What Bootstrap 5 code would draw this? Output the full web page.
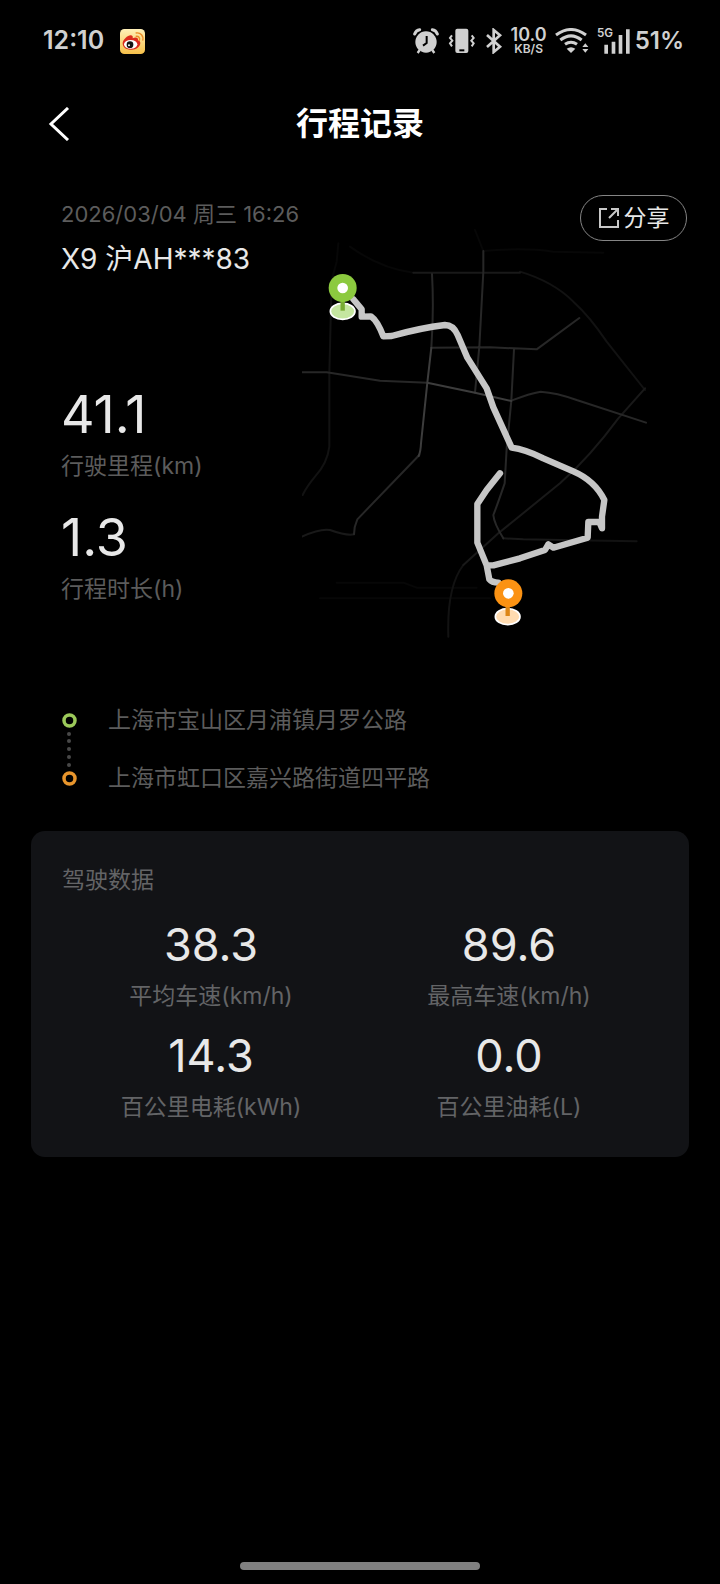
<!DOCTYPE html>
<html lang="zh-CN">
<head>
<meta charset="utf-8">
<meta name="viewport" content="width=device-width, initial-scale=1">
<title>行程记录</title>
<link href="https://cdn.jsdelivr.net/npm/bootstrap@5.3.0/dist/css/bootstrap.min.css" rel="stylesheet">
<style>
  body { background: #000; color: #e8e8e8; font-family: Inter, "Noto Sans CJK SC", sans-serif; font-weight: 400; }
  svg { display: block; flex: none; }
  .status-bar { height: 80px; padding: 2px 36px 0 43px; color: #d0d0d0; font-size: 25px; font-weight: 600; }
  .status-bar .battery { font-size: 24px; }
  .status-bar .net-rate { font-size: 18px; line-height: 16px; }
  .status-bar .net-unit { font-size: 12px; line-height: 12px; }
  .title-bar { height: 88px; padding: 0 48px; display: grid; grid-template-columns: 48px 1fr 48px; }
  .title-bar h1 { font-size: 32px; line-height: 48px; font-weight: 700; color: #fff; }
  .back-btn { color: #fff; }
  .page-main { padding: 0 31px; }
  .trip-hero { padding-left: 30px; margin-top: 24px; }
  .trip-info { width: 241px; padding-top: 6px; white-space: nowrap; }
  .muted-line { color: #5c5c5c; font-size: 22px; line-height: 32px; }
  .plate-line { font-size: 28px; line-height: 40px; margin-top: 9px; }
  .big-num { font-size: 52px; line-height: 64px; }
  .trip-stats { margin-top: 104px; }
  .stat-label { color: #5c5c5c; font-size: 23px; line-height: 32px; margin-top: 3px; }
  .trip-stats .trip-stat + .trip-stat { margin-top: 24px; }
  .trip-map { width: 100%; height: auto; }
  .share-btn { top: 3px; right: 2px; width: 107px; height: 46px; border: 1px solid #858585; border-radius: 23px; background: transparent; color: #e8e8e8; font-size: 23px; gap: 4px; }
  .route-list { padding-left: 31px; margin-top: 64px; }
  .route-list li { gap: 31px; color: #5c5c5c; font-size: 23px; line-height: 32px; }
  .route-dots { margin: -5px 0; }
  .drive-card { background: #121316; border-radius: 14px; margin-top: 37px; padding: 33px 31px 34px; }
  .drive-card h2 { color: #636466; font-size: 23px; line-height: 32px; font-weight: 400; margin: 0 0 17px; }
  .drive-card .big-num { font-size: 45px; line-height: 64px; }
  .drive-card .stat-label { color: #636466; margin-top: 3px; }
  .drive-grid { row-gap: 12px; }
  .home-bar { width: 240px; height: 8px; border-radius: 4px; background: #808080; margin-bottom: 14px; }
</style>
</head>
<body class="d-flex flex-column min-vh-100">
<div class="status-bar d-flex align-items-center justify-content-between">
  <div class="d-flex align-items-center gap-3">
    <span>12:10</span>
    <svg width="25" height="25" viewBox="0 0 75 75"><defs><linearGradient id="wb" x1="0" y1="0" x2="0" y2="1"><stop offset="0" stop-color="#fff0b8"/><stop offset="1" stop-color="#f6c04a"/></linearGradient></defs><rect width="75" height="75" rx="13" fill="url(#wb)"/><path d="M8 43c0-11 16-25 25-24 6 1 6 5 5 9 8-4 18-3 16 6 8 3 8 8 6 13-5 12-20 16-32 15C17 61 8 54 8 43z" fill="#dc2a1d"/><ellipse cx="32" cy="46" rx="20" ry="13" fill="#fff"/><circle cx="30" cy="47" r="10" fill="#141414"/><circle cx="27" cy="49" r="3" fill="#fff"/><path d="M47 22c9-2 14 5 11 13M47 12c15-3 25 9 21 23" fill="none" stroke="#ed8b25" stroke-width="4"/></svg>
  </div>
  <div class="d-flex align-items-center">
    <svg width="26" height="26" viewBox="0 0 78 78" fill="none" stroke="#d0d0d0"><circle cx="39" cy="42" r="32" fill="#d0d0d0" stroke="none"/><path d="M5 18Q9 6 20 5M73 18Q69 6 58 5" stroke-width="9" stroke-linecap="round"/><path d="M20 66l-6 9M58 66l6 9" stroke-width="7"/><path d="M41 24v21l-11 8" stroke="#000" stroke-width="6"/></svg>
    <svg class="ms-2" width="30" height="26" viewBox="0 0 90 78" fill="none" stroke="#d0d0d0" stroke-width="6"><rect x="25" y="2" width="39" height="73" rx="6" fill="#d0d0d0" stroke="none"/><path d="M37 67h15" stroke="#000"/><path d="M15 22l-6 8 7 8-7 8 6 9M74 22l6 8-7 8 7 8-6 9"/></svg>
    <svg class="ms-2" width="18" height="26" viewBox="0 0 54 78" fill="none" stroke="#d0d0d0" stroke-width="8"><path d="M6 21l39 35-19 16V6l19 16L6 57"/></svg>
    <div class="text-center ms-2"><div class="net-rate">10.0</div><div class="net-unit">KB/S</div></div>
    <svg class="ms-2" width="34" height="26" viewBox="0 0 102 78" fill="none" stroke="#d0d0d0" stroke-width="9"><path d="M3 21Q48-12 93 21M16 36q32-25 64 0M30 49q18-13 36 0"/><path d="M35 62q13-9 26 0L48 75z" fill="#d0d0d0" stroke="none"/><path d="M82 57l9-11 9 11zM82 63l9 11 9-11z" fill="#d0d0d0" stroke="none"/></svg>
    <svg class="ms-2" width="34" height="28" viewBox="0 0 102 84" fill="#d0d0d0"><text x="0" y="31" font-size="35" font-weight="600" font-family="Inter, sans-serif">5G</text><path d="M22 53h11v27H22zM44 44h11v36H44zM65 24h11v56H65zM87 7h11v73H87z"/></svg>
    <span class="battery ms-1">51%</span>
  </div>
</div>

<header class="title-bar align-items-center">
  <button class="back-btn btn p-0 border-0 text-start" type="button" aria-label="返回"><svg width="22" height="34" viewBox="0 0 22 34" fill="none" stroke="#fff" stroke-width="3"><path d="M20 1L3 17l17 16"/></svg></button>
  <h1 class="m-0 text-center">行程记录</h1>
</header>

<main class="page-main">
  <section class="trip-hero d-flex position-relative">
    <div class="trip-info flex-shrink-0">
      <div class="muted-line">2026/03/04 周三 16:26</div>
      <div class="plate-line">X9 沪AH***83</div>
      <div class="trip-stats">
        <div class="trip-stat"><div class="big-num">41.1</div><div class="stat-label">行驶里程(km)</div></div>
        <div class="trip-stat"><div class="big-num">1.3</div><div class="stat-label">行程时长(h)</div></div>
      </div>
    </div>
    <div class="flex-grow-1">
      <svg class="trip-map" viewBox="36 -24 1161 1344" fill="none" stroke-linejoin="round" stroke-linecap="round">
        <g stroke-width="6">
          <path stroke="#070707" d="M145 130L140 185L125 240M180 140Q270 205 370 218M580 153Q700 142 790 155L940 158M140 1148H340L380 1163H560M90 1195H600M555 90L580 153"/>
          <path stroke="#121212" d="M125 240L118 520V740Q112 790 75 830Q50 860 38 885M690 215Q790 245 850 305Q900 350 950 425L1065 570M520 1095Q470 1160 475 1310M850 1021L1040 1024"/>
          <path stroke="#191919" d="M370 218H690M1065 565L985 655Q900 770 810 850L625 1000L520 1095M640 1015L700 1018L850 1021M36 1010Q90 985 120 990Q170 1008 192 1003"/>
          <path stroke="#272727" d="M580 153V215L568 440L555 578M426 222Q432 330 424 443M424 443L600 442L740 448L868 354M672 448L664 602L650 745L644 850Q620 920 610 945Q612 970 640 1015M36 517H110Q190 530 270 542L412 548M664 602Q720 580 752 575Q800 578 860 600L1068 668M192 1003Q192 980 202 958L388 765"/>
          <path stroke="#3c3c3c" d="M424 443L412 548L393 730Q392 755 386 768M412 548L555 578L664 603"/>
        </g>
        <path stroke="#c6c6c6" stroke-width="19" d="M190 298L215 328V350L243 349Q262 362 280 409L305 408Q390 384 465 375Q490 375 503 405L532 473L590 565L610 622L665 743Q705 748 760 775L850 814Q915 842 943 900L936 950V985L928 966H895L893 1013L790 1043L775 1033L765 1050L690 1075L610 1096H590L562 1028V912L590 870L630 820M590 1096L598 1138Q606 1148 625 1148"/>
        <ellipse cx="158" cy="334" rx="37" ry="24" fill="#c5e6a0" stroke="#fff" stroke-width="5"/>
        <path d="M158 295v37" stroke="#78ac32" stroke-width="13" stroke-linecap="butt"/>
        <circle cx="158" cy="264" r="42" fill="#8cca3f"/><circle cx="158" cy="264" r="16" fill="#fff"/>
        <ellipse cx="653" cy="1250" rx="37" ry="24" fill="#ffdbb0" stroke="#fff" stroke-width="5"/>
        <path d="M653 1211v37" stroke="#dc8617" stroke-width="13" stroke-linecap="butt"/>
        <circle cx="655" cy="1180" r="42" fill="#fb9213"/><circle cx="655" cy="1180" r="16" fill="#fff"/>
      </svg>
    </div>
    <button class="share-btn position-absolute d-flex align-items-center justify-content-center p-0" type="button"><svg width="22" height="22" viewBox="0 0 22 22" fill="none" stroke="#c8c8c8" stroke-width="2"><path d="M9 2H2v18h18v-7M13 2h7v7M20 2l-9 9"/></svg><span>分享</span></button>
  </section>

  <ul class="route-list list-unstyled mb-0">
    <li class="d-flex align-items-center"><svg width="15" height="15" viewBox="0 0 30 30" fill="none" stroke="#9cc95a" stroke-width="7"><circle cx="15" cy="15" r="11"/></svg><span>上海市宝山区月浦镇月罗公路</span></li>
    <li class="route-dots" aria-hidden="true"><svg width="15" height="36" viewBox="0 0 15 36" fill="#484848"><circle cx="7" cy="3" r="2"/><circle cx="7" cy="10" r="2"/><circle cx="7" cy="18" r="2"/><circle cx="7" cy="26" r="2"/><circle cx="7" cy="34" r="2"/></svg></li>
    <li class="d-flex align-items-center"><svg width="15" height="15" viewBox="0 0 30 30" fill="none" stroke="#e8952c" stroke-width="7"><circle cx="15" cy="15" r="11"/></svg><span>上海市虹口区嘉兴路街道四平路</span></li>
  </ul>

  <section class="drive-card">
    <h2>驾驶数据</h2>
    <div class="drive-grid row gx-0 text-center">
      <div class="col-6"><div class="big-num">38.3</div><div class="stat-label">平均车速(km/h)</div></div>
      <div class="col-6"><div class="big-num">89.6</div><div class="stat-label">最高车速(km/h)</div></div>
      <div class="col-6"><div class="big-num">14.3</div><div class="stat-label">百公里电耗(kWh)</div></div>
      <div class="col-6"><div class="big-num">0.0</div><div class="stat-label">百公里油耗(L)</div></div>
    </div>
  </section>
</main>
<div class="home-bar mt-auto mx-auto"></div>
<script src="https://cdn.jsdelivr.net/npm/bootstrap@5.3.0/dist/js/bootstrap.bundle.min.js"></script>
</body>
</html>
